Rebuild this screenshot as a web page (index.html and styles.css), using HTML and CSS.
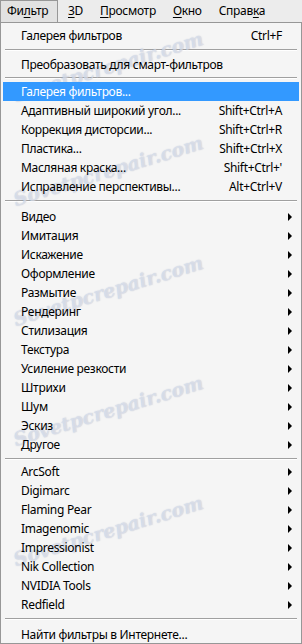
FILE: index.html
```html
<!DOCTYPE html>
<html lang="ru">
<head>
  <meta charset="UTF-8" />
  <title>Фильтр</title>
  <link rel="stylesheet" href="styles.css">
</head>
<body>
  <div class="menubar">
    <div class="top-item active">Фи<u>л</u>ьтр</div>
    <div class="top-item"><u>3</u>D</div>
    <div class="top-item"><u>П</u>росмотр</div>
    <div class="top-item"><u>О</u>кно</div>
    <div class="top-item">Справ<u>к</u>а</div>
  </div>

  <div class="dropdown">
    <div class="item"><span>Галерея фильтров</span><span class="keys">Ctrl+F</span></div>
    <div class="sep s1"></div>
    <div class="item"><span>Преобразовать для смарт-фильтров</span></div>
    <div class="sep s2"></div>
    <div class="item hover"><span>Галерея фильтров...</span></div>
    <div class="item"><span>Адаптивный широкий угол...</span><span class="keys">Shift+Ctrl+A</span></div>
    <div class="item"><span>Коррекция дисторсии...</span><span class="keys">Shift+Ctrl+R</span></div>
    <div class="item"><span>Пластика...</span><span class="keys">Shift+Ctrl+X</span></div>
    <div class="item"><span>Масляная краска...</span><span class="keys">Shift+Ctrl+'</span></div>
    <div class="item"><span>Исправление перспективы...</span><span class="keys">Alt+Ctrl+V</span></div>
    <div class="sep s3"></div>
    <div class="item sub">Видео</div>
    <div class="item sub">Имитация</div>
    <div class="item sub">Искажение</div>
    <div class="item sub">Оформление</div>
    <div class="item sub">Размытие</div>
    <div class="item sub">Рендеринг</div>
    <div class="item sub">Стилизация</div>
    <div class="item sub">Текстура</div>
    <div class="item sub">Усиление резкости</div>
    <div class="item sub">Штрихи</div>
    <div class="item sub">Шум</div>
    <div class="item sub">Эскиз</div>
    <div class="item sub">Другое</div>
    <div class="sep s4"></div>
    <div class="item sub">ArcSoft</div>
    <div class="item sub">Digimarc</div>
    <div class="item sub">Flaming Pear</div>
    <div class="item sub">Imagenomic</div>
    <div class="item sub">Impressionist</div>
    <div class="item sub">Nik Collection</div>
    <div class="item sub">NVIDIA Tools</div>
    <div class="item sub">Redfield</div>
    <div class="sep s5"></div>
    <div class="item last"><span>Найти фильтры в Интернете...</span></div>

    <div class="watermark w0">Sovetpcrepair.com</div>
    <div class="watermark w1">Sovetpcrepair.com</div>
    <div class="watermark w2">Sovetpcrepair.com</div>
    <div class="watermark w3">Sovetpcrepair.com</div>
    <div class="watermark w4">Sovetpcrepair.com</div>
  </div>
</body>
</html>
```

FILE: styles.css
```css
* {
  box-sizing: border-box;
}
body {
  margin: 0;
  width: 302px;
  height: 644px;
  overflow: hidden;
  background: #f0f0f0;
  font-family: 'Noto Sans', sans-serif;
  font-size: 12px;
  letter-spacing: -0.3px;
  color: #000;
}
u {
  text-decoration: underline;
  text-underline-offset: 2px;
}

/* menu bar */
.menubar {
  display: flex;
  height: 22px;
  background: #ececec;
}
.top-item {
  padding: 0 7px;
  line-height: 21px;
  margin-right: 3px;
}
.top-item.active {
  width: 58px;
  background: #e2e2e2;
  border: 1px solid #979797;
  border-bottom: none;
  line-height: 20px;
  padding-left: 6px;
}

/* dropdown */
.dropdown {
  position: relative;
  height: 622px;
  background: #f5f5f5;
  border: 1px solid #979797;
  padding: 3px 2px 0;
  overflow: hidden;
}
.item {
  display: flex;
  justify-content: space-between;
  height: 19px;
  line-height: 19px;
  padding: 0 17px 0 18px;
  position: relative;
  z-index: 1;
}
.item.hover {
  background: #3399ff;
  color: #fff;
}
.item.last {
  margin-top: 1px;
}
.sub::after {
  content: "";
  position: absolute;
  right: 7px;
  top: 6px;
  border-left: 4px solid #000;
  border-top: 4px solid transparent;
  border-bottom: 4px solid transparent;
}
.sep {
  height: 10px;
  position: relative;
}
.sep::before {
  content: "";
  position: absolute;
  left: 2px;
  right: 2px;
  top: 4px;
  border-top: 1px solid #a0a0a0;
  border-bottom: 1px solid #fff;
}
.sep.s2 {
  height: 8px;
}
.sep.s2::before {
  top: 3px;
}
.sep.s3 {
  height: 11px;
}
.sep.s4 {
  height: 8px;
}

/* faint site watermark */
.watermark {
  position: absolute;
  left: 16px;
  font-family: 'DejaVu Serif', serif;
  font-style: italic;
  font-weight: bold;
  font-size: 19px;
  line-height: 20px;
  letter-spacing: 0;
  color: rgba(236, 240, 248, 0.6);
  text-shadow: 0 0 1px rgba(120, 132, 165, 0.5);
  transform: rotate(-17deg);
  transform-origin: left bottom;
  white-space: nowrap;
  pointer-events: none;
}
.w0 { top: 62px; }
.w1 { top: 166px; }
.w2 { top: 286px; }
.w3 { top: 406px; }
.w4 { top: 526px; }
```
